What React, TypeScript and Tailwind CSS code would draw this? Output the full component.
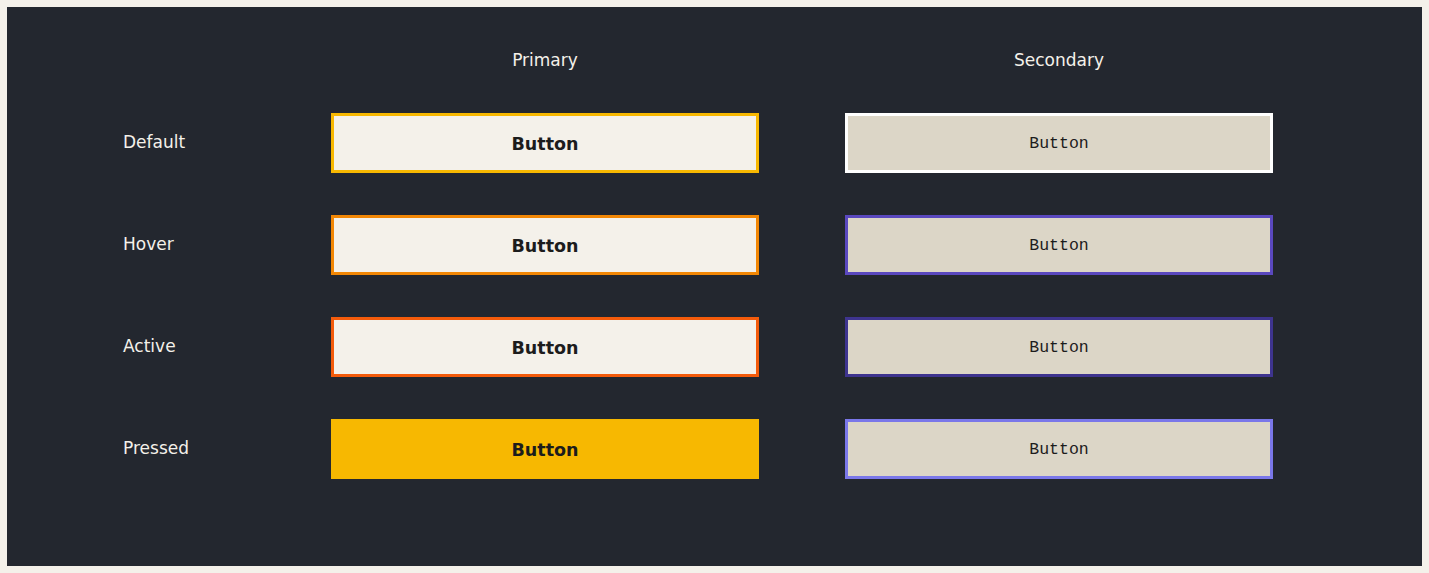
import React from 'react'

const ROWS = [
  {
    label: 'Default',
    primary: 'bg-[#f4f1ea] border-[3px] border-[#f7b801]',
    secondary: 'border-[3px] border-[#ffffff]',
  },
  {
    label: 'Hover',
    primary: 'bg-[#f4f1ea] border-[3px] border-[#f28705]',
    secondary: 'border-[3px] border-[#5a48bf]',
  },
  {
    label: 'Active',
    primary: 'bg-[#f4f1ea] border-[3px] border-[#f35b0b]',
    secondary: 'border-[3px] border-[#3e348f]',
  },
  {
    label: 'Pressed',
    primary: 'bg-[#f7b801]',
    secondary: 'border-[3px] border-[#7a77e9]',
  },
]

export default function App() {
  return (
    <div className="w-[1429px] h-[573px] bg-[#f4f1ea] p-[7px]">
      <div className="w-full h-full bg-[#23272f] pl-[116px] pt-[41px] font-['DejaVu_Sans',sans-serif] text-[#f4f1ea]">
        <div className="grid grid-cols-[122px_428px_428px] gap-x-[86px]">
          {/* header */}
          <div />
          <div className="text-center text-[17px] leading-6">Primary</div>
          <div className="text-center text-[17px] leading-6">Secondary</div>

          <div className="col-span-3 h-[41px]" />

          {ROWS.map((row, i) => (
            <React.Fragment key={row.label}>
              <div className={`flex items-center text-[17px] ${i > 0 ? 'mt-[42px]' : ''}`}>
                {row.label}
              </div>
              <button
                className={`h-[60px] flex items-center justify-center pt-[2px] text-[17.5px] font-bold text-[#1c1c1c] font-['DejaVu_Sans',sans-serif] ${row.primary} ${i > 0 ? 'mt-[42px]' : ''}`}
              >
                Button
              </button>
              <button
                className={`h-[60px] flex items-center justify-center pt-[2px] bg-[#dcd6c7] text-[16.5px] text-[#1c1c1c] font-['Liberation_Mono',monospace] ${row.secondary} ${i > 0 ? 'mt-[42px]' : ''}`}
              >
                Button
              </button>
            </React.Fragment>
          ))}
        </div>
      </div>
    </div>
  )
}
